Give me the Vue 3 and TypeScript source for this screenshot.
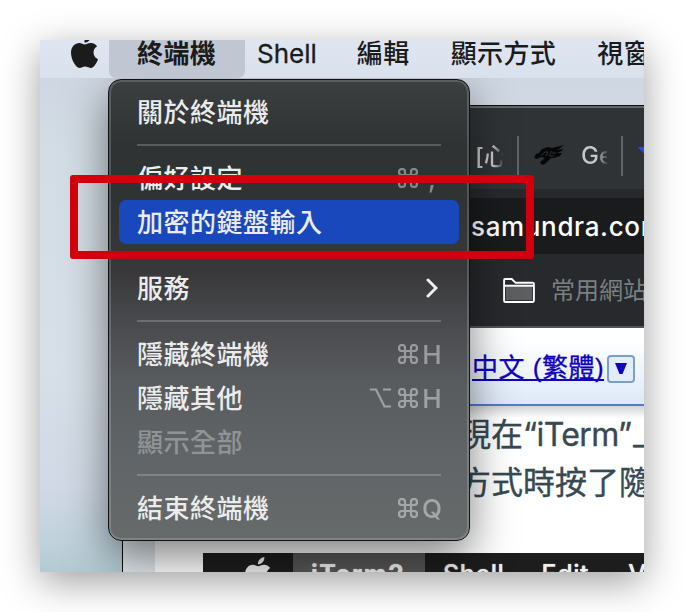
<script setup lang="ts">
interface MenuRow {
  kind: 'item' | 'separator'
  label?: string
  keys?: string
  command?: boolean
  option?: boolean
  submenu?: boolean
  active?: boolean
  disabled?: boolean
}

const menuBar: string[] = ['Shell', '編輯', '顯示方式', '視窗']

const rows: MenuRow[] = [
  { kind: 'item', label: '關於終端機' },
  { kind: 'separator' },
  { kind: 'item', label: '偏好設定', command: true, keys: ',' },
  { kind: 'item', label: '加密的鍵盤輸入', active: true },
  { kind: 'separator' },
  { kind: 'item', label: '服務', submenu: true },
  { kind: 'separator' },
  { kind: 'item', label: '隱藏終端機', command: true, keys: 'H' },
  { kind: 'item', label: '隱藏其他', option: true, command: true, keys: 'H' },
  { kind: 'item', label: '顯示全部', disabled: true },
  { kind: 'separator' },
  { kind: 'item', label: '結束終端機', command: true, keys: 'Q' },
]

const applePath =
  'M788 341c-6 4-108 62-108 190 0 149 130 201 134 203-1 3-21 71-69 141-43 61-87 123-155 123s-85-40-164-40c-76 0-103 41-166 41s-106-57-155-127C46 791 0 666 0 541c0-194 126-297 250-297 66 0 121 43 162 43 40 0 102-46 177-46 28 0 130 3 199 100zM554 159c31-37 53-88 53-139 0-7-1-14-2-20-51 2-111 34-147 76-28 32-55 83-55 135 0 8 1 16 2 18 3 1 8 1 13 1 45 0 103-30 136-71z'
</script>

<template>
  <main class="desktop">
    <header class="menubar">
      <svg class="apple" viewBox="0 0 814 1000" preserveAspectRatio="none"><path :d="applePath" /></svg>
      <span class="app-name">終端機</span>
      <span v-for="name in menuBar" :key="name" class="bar-item">{{ name }}</span>
    </header>

    <section class="browser">
      <div class="tabs">
        <span class="tab-title first">[心</span>
        <i class="tab-line"></i>
        <svg class="wing" viewBox="0 0 32 22">
          <path d="M1 14 3 10 6 9 9 5 15 3 19 4 31 1 26 5 23 6 30 5 29 7 24 9 29 9 27 12 21 14 18 14 12 20 9 21 7 18 12 14 8 13 4 15Z" />
          <path class="wing-cut" d="M8 12 12 8 15 8 13 12M16 12 19 7M17 12 21 12M19 9 23 9" />
        </svg>
        <span class="tab-title second">Ge</span>
        <i class="tab-line"></i>
        <svg class="blue-mark" viewBox="0 0 14 16"><path d="M0 0H14V16Z" /></svg>
      </div>
      <div class="address">samundra.com</div>
      <div class="bookmarks">
        <svg class="folder" viewBox="0 0 33 26">
          <path class="folder-fill" d="M3 9H30V23H3Z" />
          <path d="M1 23V2Q1 1 2 1H9L13 5H30.500Q32 5 32 6V23.500Q32 25 31 25H2Q1 25 1 23ZM1 8H32" />
        </svg>
        <span class="bookmark-name">常用網站</span>
      </div>
      <div class="translate">
        <span class="language">中文 (繁體)</span>
        <span class="picker"><svg viewBox="0 0 14 13"><path d="M1 1H13L8.500 12H5.500Z" /></svg></span>
      </div>
      <div class="page">
        <div class="article">
          <p>現在<span class="latin">“iTerm”</span>上</p>
          <p>方式時按了隨</p>
          <div class="shot">
            <svg class="shot-apple" viewBox="0 0 814 1000"><path :d="applePath" /></svg>
            <span class="shot-app">iTerm2</span>
            <span class="shot-item">Shell</span>
            <span class="shot-item edit">Edit</span>
            <span class="shot-item view">View</span>
          </div>
        </div>
      </div>
    </section>

    <nav class="menu">
      <template v-for="(row, index) in rows" :key="index">
        <div v-if="row.kind === 'separator'" class="separator"></div>
        <div v-else class="row" :class="{ active: row.active, disabled: row.disabled }">
          <span class="label">{{ row.label }}</span>
          <svg v-if="row.option" class="option" viewBox="0 0 21 20">
            <path d="M0 1.500H6L14.500 18.500H21M13 1.500H21" />
          </svg>
          <svg v-if="row.command" class="command" viewBox="0 0 20 20">
            <path d="M7 7H13V13H7ZM7 7H4A3 3 0 1 1 7 4ZM13 7V4A3 3 0 1 1 16 7ZM13 13H16A3 3 0 1 1 13 16ZM7 13V16A3 3 0 1 1 4 13Z" />
          </svg>
          <span v-if="row.keys" class="key">{{ row.keys }}</span>
          <svg v-if="row.submenu" class="chevron" viewBox="0 0 12 20"><path d="M2 2 10 10 2 18" /></svg>
        </div>
      </template>
    </nav>

    <div class="callout"></div>
  </main>
</template>

<style>
body {
  background: #fff;
  overflow: hidden;
}
</style>

<style scoped>
.desktop {
  position: relative;
  width: 604px;
  height: 532px;
  margin: 40px;
  background: linear-gradient(180deg, #ced7e2 38px, #d3dde5 110px, #d7e0e8 330px, #d0d9e5 450px, #bdd0da 510px, #b3cad3 532px);
  box-shadow: 0 10px 36px rgba(0, 0, 0, 0.38);
  font-family: Inter, "Noto Sans CJK TC", sans-serif;
}
.menubar {
  display: flex;
  width: 604px;
  height: 38px;
  overflow: hidden;
  background: linear-gradient(#dfe6f2, #d9e1ed);
  color: #1b1b1b;
  font-size: 26px;
  line-height: 27px;
  letter-spacing: 0.4px;
  white-space: nowrap;
}
.apple {
  flex: none;
  width: 27px;
  height: 33px;
  margin: -5px 11px 0 31px;
  fill: #1b1b1b;
}
.app-name {
  box-sizing: border-box;
  flex: none;
  width: 136px;
  padding-left: 28px;
  margin-right: 12px;
  border-radius: 0 0 7px 7px;
  background: #c0c7d3;
  font-weight: 700;
}
.bar-item {
  flex: none;
  margin-right: 41px;
  font-weight: 500;
}
.bar-item:nth-child(3) {
  margin-right: 40px;
  font-weight: 400;
  letter-spacing: 0;
  -webkit-text-stroke: 0.3px #1b1b1b;
}
.browser {
  position: absolute;
  left: 82px;
  top: 65px;
  width: 522px;
  height: 467px;
  box-sizing: border-box;
  overflow: hidden;
  border-left: 1px solid #050505;
  border-top: 1px solid #0c0d0e;
  background: #fff;
}
.tabs {
  display: flex;
  align-items: center;
  box-sizing: border-box;
  height: 92px;
  padding: 2px 0 0 352px;
  border-top: 2px solid #626467;
  background: linear-gradient(#303336 0 81px, #28292d 81px);
  color: #c6c7c8;
  font-size: 24px;
}
.tab-title {
  flex: none;
  width: 28px;
  overflow: hidden;
  white-space: nowrap;
}
.first {
  font-weight: 500;
  background: linear-gradient(90deg, #c6c7c8 65%, #44474a);
  -webkit-background-clip: text;
  color: transparent;
}
.second {
  width: 26px;
  padding-top: 3px;
  font-weight: 500;
  background: linear-gradient(90deg, #c6c7c8 60%, #44474a);
  -webkit-background-clip: text;
  color: transparent;
}
.tab-line {
  flex: none;
  width: 2px;
  height: 40px;
  margin-left: 14px;
  margin-top: 4px;
  background: #626467;
}
.wing {
  flex: none;
  width: 32px;
  height: 22px;
  margin: 2px 16px 0 14px;
  fill: #070707;
}
.wing-cut {
  fill: none;
  stroke: #393b3e;
  stroke-width: 0.8;
}
.blue-mark {
  flex: none;
  width: 14px;
  height: 16px;
  margin: 2px 0 0 15px;
  fill: #2747f5;
}
.address {
  height: 56px;
  padding-left: 348px;
  background: #1a1b1c;
  color: #fff;
  font-size: 26px;
  font-weight: 500;
  line-height: 57px;
  letter-spacing: 0.65px;
  white-space: nowrap;
}
.bookmarks {
  display: flex;
  align-items: center;
  box-sizing: border-box;
  height: 74px;
  padding-left: 380px;
  border-bottom: 2px solid #535457;
  background: #28292d;
  color: #7b8082;
  font-size: 24px;
  white-space: nowrap;
}
.folder {
  flex: none;
  width: 32px;
  height: 25px;
  margin-right: 16px;
  fill: none;
  stroke: #fff;
  stroke-width: 2;
}
.bookmark-name {
  margin-bottom: 4px;
}
.folder-fill {
  fill: #5d5e60;
  stroke: none;
}
.translate {
  display: flex;
  align-items: center;
  box-sizing: border-box;
  height: 78px;
  padding-left: 349px;
  border-bottom: 2px solid #5579cd;
  background: linear-gradient(#fff 12px, #dce9f8);
  color: #0f00bd;
  white-space: nowrap;
}
.language {
  margin-top: 3px;
  font-family: "Liberation Sans", "Noto Sans CJK TC", sans-serif;
  font-size: 26px;
  line-height: 30px;
  letter-spacing: 0.5px;
  text-decoration: underline;
  text-decoration-thickness: 2px;
  text-underline-offset: 2px;
  text-decoration-skip-ink: none;
  -webkit-text-stroke: 0.3px #0f00bd;
}
.picker {
  display: grid;
  place-items: center;
  box-sizing: border-box;
  width: 28px;
  height: 28px;
  margin: 5px 0 0 3px;
  border: 2px solid #7d9fc5;
  border-radius: 4px;
  background: #e2edfb;
}
.picker svg {
  width: 14px;
  height: 13px;
  fill: #1000c8;
}
.page {
  height: 166px;
  padding-left: 32px;
  background: #e0e6eb;
}
.article {
  height: 166px;
  padding-left: 48px;
  background: linear-gradient(#d2d3d5, #fff 12px);
  color: #374953;
}
.article p {
  margin: 0;
  padding-left: 256px;
  height: 48px;
  font-size: 32px;
  line-height: 57px;
  white-space: nowrap;
  -webkit-text-stroke: 0.35px #374953;
}
.latin {
  letter-spacing: -0.6px;
}
.shot {
  display: flex;
  height: 19px;
  margin-top: 51px;
  overflow: hidden;
  background: #1d1d1d;
  color: #eee;
  font-size: 25px;
  font-weight: 500;
  line-height: 43px;
  white-space: nowrap;
  letter-spacing: 0.6px;
  text-shadow: 0 0 1px #eee;
}
.shot-apple {
  flex: none;
  width: 26px;
  height: 32px;
  margin: 4px 22px 0 42px;
  fill: #eee;
  filter: blur(0.7px);
}
.shot-app {
  box-sizing: border-box;
  flex: none;
  width: 132px;
  padding-left: 18px;
  background: #565656;
  font-weight: 700;
  letter-spacing: 1.500px;
}
.shot-item {
  margin-left: 18px;
}
.edit {
  margin-left: 37px;
}
.view {
  margin-left: 39px;
}
.menu {
  position: absolute;
  left: 68px;
  top: 39px;
  box-sizing: border-box;
  width: 362px;
  height: 462px;
  padding: 10px 10px 8px;
  border: 1px solid #101112;
  border-radius: 13px;
  background: linear-gradient(#3b3f40, #303334 65px, #303333 120px, #38383a 190px, #48494c 240px, #595c5f 305px, #616467 370px, #666a6a 460px);
  box-shadow: inset 0 0 0 2px rgba(255, 255, 255, 0.17), 0 16px 44px rgba(0, 0, 0, 0.5);
  clip-path: inset(-1px -100px -31px -68px);
  color: #ececec;
  font-size: 26px;
}
.row {
  display: flex;
  align-items: center;
  height: 44px;
  padding: 0 18px;
  border-radius: 7px;
}
.label {
  flex: 1;
  font-family: "Noto Sans CJK TC", sans-serif;
  font-weight: 500;
  line-height: 42px;
  margin-bottom: 2px;
  letter-spacing: 0.5px;
  white-space: nowrap;
}
.active {
  background: #1948bd;
}
.disabled {
  color: #919496;
}
.separator {
  height: 2px;
  margin: 10px 18px;
  background: rgba(255, 255, 255, 0.2);
}
.option,
.command {
  flex: none;
  width: 20px;
  height: 20px;
  fill: none;
  stroke: #fff;
  stroke-width: 2.200;
  opacity: 0.42;
}
.option {
  width: 21px;
  margin-right: 7px;
}
.key {
  width: 20px;
  margin: 0 -1px 0 4px;
  opacity: 0.42;
  color: #fff;
  font-weight: 500;
  text-align: center;
}
.chevron {
  width: 12px;
  height: 20px;
  margin-right: 3px;
  fill: none;
  stroke: #eee;
  stroke-width: 3;
  stroke-linecap: round;
}
.callout {
  position: absolute;
  left: 30px;
  top: 135px;
  box-sizing: border-box;
  width: 464px;
  height: 83.500px;
  border: 8px solid #d0000d;
  border-radius: 3px;
}
</style>
